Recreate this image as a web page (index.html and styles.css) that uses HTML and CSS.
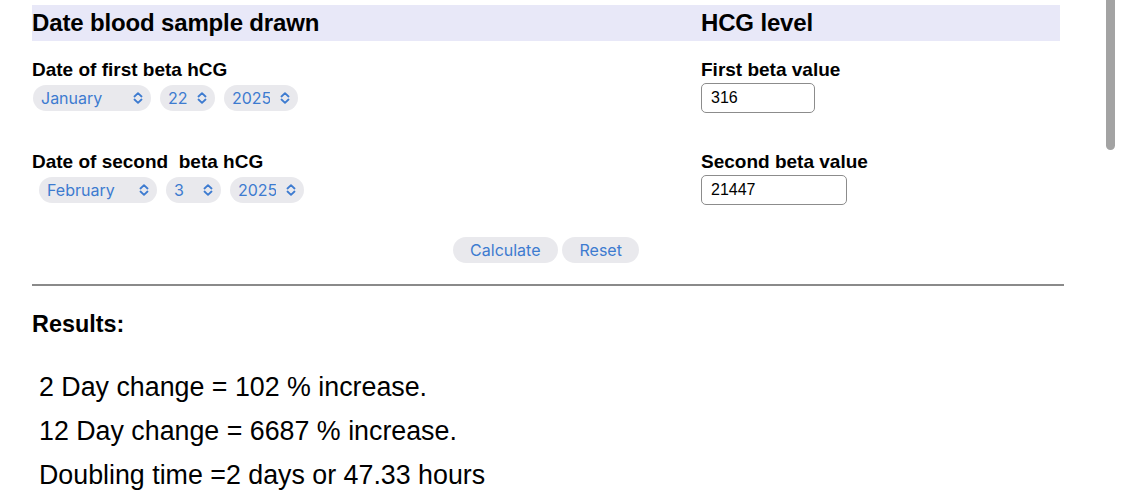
FILE: index.html
```html
<!DOCTYPE html>
<html lang="en">
<head>
  <meta charset="UTF-8" />
  <meta name="viewport" content="width=device-width, initial-scale=1.0"/>
  <title>hCG Doubling Time Calculator</title>
  <link rel="stylesheet" href="styles.css">
</head>
<body>

  <div class="calc">
    <div class="head">
      <div>Date blood sample drawn</div>
      <div>HCG level</div>
    </div>

    <div class="fields">
      <div class="field">
        <label>Date of first beta hCG</label>
        <div class="dates">
          <span class="pick month">
            <select><option>January</option><option>February</option><option>March</option></select>
            <svg viewBox="0 0 10 12"><path d="M1.5 4.5 5 1.2 8.5 4.5M1.5 7.5 5 10.8 8.5 7.5"/></svg>
          </span>
          <span class="pick day">
            <select><option>22</option></select>
            <svg viewBox="0 0 10 12"><path d="M1.5 4.5 5 1.2 8.5 4.5M1.5 7.5 5 10.8 8.5 7.5"/></svg>
          </span>
          <span class="pick year">
            <select><option>2025</option></select>
            <svg viewBox="0 0 10 12"><path d="M1.5 4.5 5 1.2 8.5 4.5M1.5 7.5 5 10.8 8.5 7.5"/></svg>
          </span>
        </div>
      </div>
      <div class="field">
        <label>First beta value</label>
        <input type="text" class="beta" value="316">
      </div>

      <div class="field">
        <label>Date of second&nbsp; beta hCG</label>
        <div class="dates indent">
          <span class="pick month">
            <select><option>February</option><option>January</option><option>March</option></select>
            <svg viewBox="0 0 10 12"><path d="M1.5 4.5 5 1.2 8.5 4.5M1.5 7.5 5 10.8 8.5 7.5"/></svg>
          </span>
          <span class="pick day">
            <select><option>3</option></select>
            <svg viewBox="0 0 10 12"><path d="M1.5 4.5 5 1.2 8.5 4.5M1.5 7.5 5 10.8 8.5 7.5"/></svg>
          </span>
          <span class="pick year">
            <select><option>2025</option></select>
            <svg viewBox="0 0 10 12"><path d="M1.5 4.5 5 1.2 8.5 4.5M1.5 7.5 5 10.8 8.5 7.5"/></svg>
          </span>
        </div>
      </div>
      <div class="field">
        <label>Second beta value</label>
        <input type="text" class="beta wide" value="21447">
      </div>
    </div>

    <div class="actions">
      <button>Calculate</button>
      <button>Reset</button>
    </div>

    <hr>

    <h3>Results:</h3>
    <div class="results">
      <p>2 Day change = 102 % increase.</p>
      <p>12 Day change = 6687 % increase.</p>
      <p>Doubling time =2 days or 47.33 hours</p>
    </div>
  </div>

  <!-- overlay scrollbar -->
  <div class="scroll-thumb"></div>

</body>
</html>
```

FILE: styles.css
```css
html {
  overflow: hidden;
}
body {
  margin: 0;
  font-family: 'Liberation Sans', Arial, sans-serif;
  background: #fff;
  color: #000;
}

.calc {
  width: 1032px;
  padding: 5px 0 0 32px;
}

.head {
  display: grid;
  grid-template-columns: 669px 359px;
  width: 1028px;
  background: #e8e8f8;
  font-size: 24px;
  font-weight: bold;
  line-height: 36px;
  letter-spacing: -0.15px;
}

.fields {
  display: grid;
  grid-template-columns: 669px 359px;
  row-gap: 38px;
  margin-top: 18px;
}
.field label {
  display: block;
  font-size: 19px;
  font-weight: bold;
  line-height: 22px;
}

.dates {
  display: flex;
  gap: 9px;
  margin-top: 4px;
  padding-left: 1px;
}
.dates.indent {
  padding-left: 7px;
}
.pick {
  display: inline-flex;
  align-items: center;
  gap: 10px;
  height: 26px;
  background: #e9e9ed;
  border-radius: 13px;
  padding: 0 8px;
  color: #3d7bd0;
}
.pick select {
  appearance: none;
  -webkit-appearance: none;
  border: none;
  background: transparent;
  font-family: Inter, 'Noto Sans', sans-serif;
  font-size: 16px;
  color: #3d7bd0;
  padding: 0;
  outline: none;
}
.pick svg {
  width: 10px;
  height: 12px;
  fill: none;
  stroke: #3d7bd0;
  stroke-width: 1.8;
  stroke-linecap: round;
  stroke-linejoin: round;
}
.pick.month select { width: 82px; }
.pick.day select { width: 19px; }
.pick.year select { width: 38px; }

.beta {
  box-sizing: border-box;
  width: 114px;
  height: 30px;
  margin-top: 2px;
  padding: 0 9px;
  border: 1px solid #8c8c8c;
  border-radius: 5px;
  font-family: 'Liberation Sans', Arial, sans-serif;
  font-size: 16px;
  color: #000;
}
.beta.wide {
  width: 146px;
}

.actions {
  display: flex;
  justify-content: center;
  gap: 4px;
  margin-top: 32px;
  padding-right: 4px;
}
.actions button {
  height: 26px;
  border: none;
  border-radius: 13px;
  background: #e9e9ed;
  color: #3d7bd0;
  font-family: Inter, 'Noto Sans', sans-serif;
  font-size: 16px;
  padding: 0 17.5px;
}

hr {
  width: 1032px;
  margin: 21px 0 0;
  border: none;
  border-top: 2px solid #8a8a8a;
}

h3 {
  margin: 25px 0 0;
  font-size: 23.4px;
  line-height: 27px;
}

.results {
  margin-top: 27px;
  padding-left: 7px;
}
.results p {
  margin: 0;
  font-size: 26.8px;
  line-height: 44px;
}

.scroll-thumb {
  position: absolute;
  top: 0;
  left: 1106px;
  width: 9px;
  height: 150px;
  background: #a3a3a3;
  border-radius: 0 0 5px 5px;
}
```
